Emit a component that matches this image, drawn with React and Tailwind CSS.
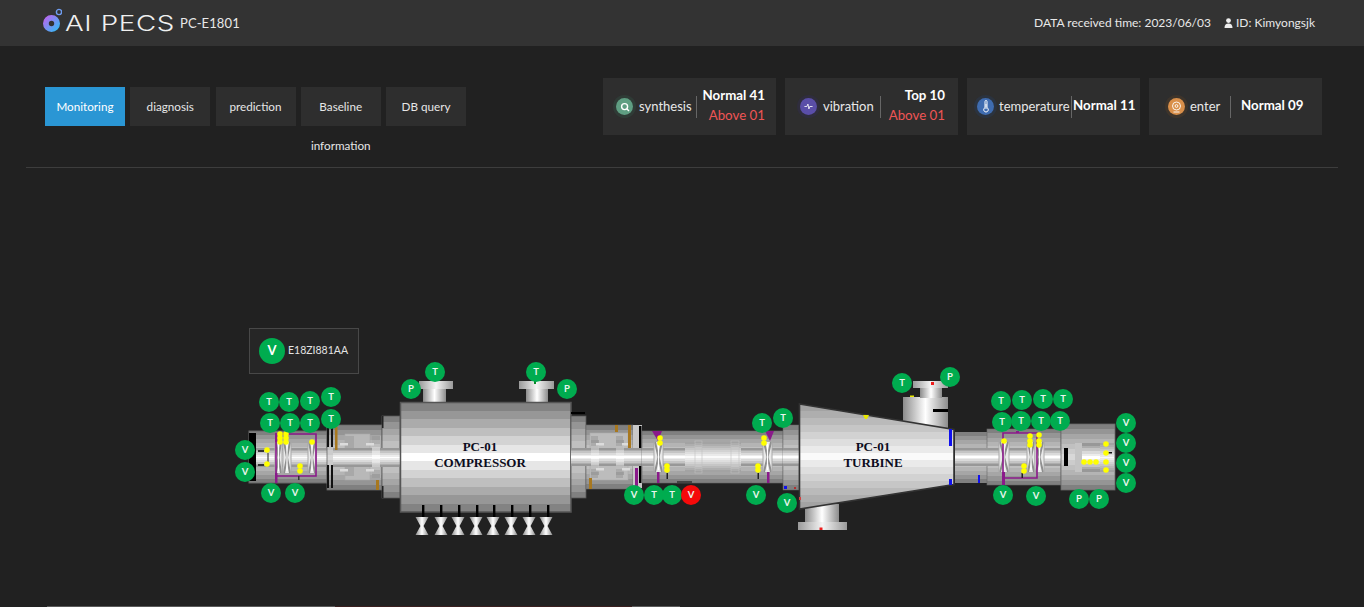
import React from "react";

const font = { fontFamily: "Lato, 'Noto Sans', sans-serif" };

const levels = ["#838383", "#979797", "#ababab", "#bfbfbf", "#d3d3d3", "#e6e6e6", "#ffffff"];
function Band({ id, lv = levels }) {
  const seq = [...lv, ...lv.slice(0, -1).reverse()];
  const n = seq.length;
  return (
    <linearGradient id={id} x1="0" y1="0" x2="0" y2="1">
      {seq.flatMap((c, i) => [
        <stop key={i + "a"} offset={i / n} stopColor={c} />,
        <stop key={i + "b"} offset={(i + 1) / n} stopColor={c} />,
      ])}
    </linearGradient>
  );
}

const R = ({ x, y, w, h, f, s, sw, o }) => <rect x={x} y={y} width={w} height={h} fill={f} stroke={s} strokeWidth={sw} opacity={o} />;
const Dot = ({ x, y }) => <circle cx={x} cy={y} r="2.8" fill="#ffff00" />;

function Bow({ x, y, w, h }) {
  return <polygon points={`${x},${y} ${x + w},${y} ${x + w * 0.62},${y + h / 2} ${x + w},${y + h} ${x},${y + h} ${x + w * 0.38},${y + h / 2}`} fill="url(#v)" />;
}

function Cross({ x, y, w, h }) {
  return (
    <g>
      <R x={x} y={y} w={w} h={h} f="#e9e9e9" />
      <path d={`M${x + 1} ${y}L${x + w - 1} ${y + h}M${x + w - 1} ${y}L${x + 1} ${y + h}`} stroke="#8e8e8e" strokeWidth="2" fill="none" />
      <path d={`M${x + w / 2} ${y + 2}V${y + h - 2}`} stroke="#fff" strokeWidth="1.2" />
      <path d={`M${x} ${y}V${y + h}M${x + w} ${y}V${y + h}`} stroke="#a8a8a8" strokeWidth="1" />
    </g>
  );
}

function Nozzle({ fx, fy, fw, fh, nx, ny, nw, nh }) {
  return (
    <g>
      <R x={nx} y={ny} w={nw} h={nh} f="url(#hz2)" />
      <R x={fx} y={fy} w={fw} h={fh} f="url(#fl)" />
    </g>
  );
}

function Coupler({ x, top, bottom }) {
  return (
    <g>
      <R x={x} y={top} w={8} h={bottom - top} f="url(#sh)" o={0.75} />
    </g>
  );
}

function Machine() {
  const valveX = [422, 441, 458, 476, 493, 511, 529, 546];
  const stemX = [423, 441, 459, 477, 494, 512, 530, 548];
  const yellow = [
    [267, 450], [267, 464], [280, 434], [286, 434], [280, 438], [286, 438], [280, 442], [286, 442], [312, 442], [300, 466], [300, 471],
    [660, 438], [660, 443], [667, 466], [667, 470], [764, 438], [764, 443], [758, 466], [758, 470],
    [1004, 441], [1030, 436], [1030, 441], [1030, 445], [1039, 435], [1039, 441], [1039, 445], [1024, 466], [1024, 471],
    [1106, 444], [1106, 453], [1106, 462], [1106, 470], [1084, 462], [1090, 462], [1096, 462],
  ];
  return (
    <svg className="absolute inset-0 w-full h-full" viewBox="0 168 1364 438">
      <defs>
        <Band id="b" />
        <Band id="bd" lv={["#808080", "#959595", "#a6a6a6", "#b4b4b4", "#c0c0c0", "#cccccc", "#d8d8d8"]} />
        <Band id="t" lv={["#a3a3a3", "#aeaeae", "#bababa", "#c6c6c6", "#d2d2d2", "#dedede", "#eaeaea", "#fafafa"]} />
        <Band id="sh" lv={["#989898", "#adadad", "#c4c4c4", "#dadada", "#ececec", "#ffffff"]} />
        <linearGradient id="hz2" x1="0" x2="1" y1="0" y2="0">
          <stop offset="0" stopColor="#8c8c8c" /><stop offset="0.5" stopColor="#ffffff" /><stop offset="1" stopColor="#8c8c8c" />
        </linearGradient>
        <linearGradient id="fl" x1="0" x2="1" y1="0" y2="0">
          <stop offset="0" stopColor="#9a9a9a" /><stop offset="0.5" stopColor="#f4f4f4" /><stop offset="1" stopColor="#9a9a9a" />
        </linearGradient>
        <linearGradient id="v" x1="0" x2="1" y1="0" y2="0">
          <stop offset="0" stopColor="#8a8a8a" /><stop offset="0.5" stopColor="#ffffff" /><stop offset="1" stopColor="#8a8a8a" />
        </linearGradient>
      </defs>

      {/* left bearing */}
      <R x={249} y={431} w={78} h={52} f="url(#bd)" s="#666" sw={1} />
      <R x={249} y={433} w={7} h={48} f="#000" />
      <R x={256} y={448} w={144} h={19} f="url(#sh)" />
      <R x={258} y={450} w={6} h={2} f="#333" />
      <R x={258} y={464} w={6} h={2} f="#333" />
      <R x={267.5} y={453} w={1} h={10} f="#222" />
      <Cross x={275} y={442} w={7} h={31} />
      <Cross x={283} y={442} w={8} h={31} />
      <Cross x={308} y={442} w={8} h={31} />
      <path d="M276 434H316V476H276Z" fill="none" stroke="#8a1a8a" strokeWidth="1.6" />
      <R x={275} y={433} w={2.5} h={9} f="#8a1a8a" />
      <R x={275} y={473} w={2.5} h={10} f="#8a1a8a" />
      <R x={298} y={476} w={1.5} h={4} f="#333" />

      {/* left coupling */}
      <R x={327} y={425} w={55} h={65} f="url(#bd)" s="#666" sw={0.8} />
      <R x={382} y={416} w={18} h={82} f="url(#bd)" s="#555" sw={0.8} />
      <R x={382} y={416} w={1.5} h={12} f="#222" />
      <R x={382} y={486} w={1.5} h={12} f="#222" />
      <R x={345} y={434} w={25} h={46} f="#b8b8b8" s="#a8a8a8" sw={0.6} />
      <R x={345} y={436} w={9} h={40} f="#a8a8a8" />
      <R x={372} y={436} w={9} h={42} f="#b0b0b0" />
      <R x={333} y={448} w={67} h={19} f="url(#sh)" />
      <Coupler x={372} top={436} bottom={478} />
      <R x={340} y={443} w={8} h={2.5} f="#dcdcdc" />
      <R x={340} y={469} w={8} h={2.5} f="#dcdcdc" />
      <R x={366} y={443} w={8} h={2.5} f="#dcdcdc" />
      <R x={366} y={469} w={8} h={2.5} f="#dcdcdc" />
      <R x={327} y={428} w={2} h={19} f="#111" />
      <R x={331} y={428} w={2} h={19} f="#111" />
      <R x={327} y={465} w={2} h={23} f="#111" />
      <R x={331} y={465} w={2} h={23} f="#111" />
      <R x={335} y={427} w={2.5} h={23} f="#a8781f" />
      <R x={376} y={480} w={3} h={10} f="#a8781f" />

      {/* compressor */}
      <Nozzle fx={419} fy={381} fw={34} fh={8} nx={423} ny={389} nw={23} nh={14} />
      <Nozzle fx={519} fy={381} fw={35} fh={8} nx={526} ny={389} nw={22} nh={14} />
      <R x={534} y={381} w={2} h={3} f="#0a8a2a" />
      <R x={400.5} y={402.5} w={170.5} h={109.5} f="url(#b)" s="#555" sw={1.5} />
      {stemX.map((x) => <R key={x} x={x - 1} y={505} w={2.4} h={12} f="#000" />)}
      {valveX.map((x) => <Bow key={x} x={x - 6.5} y={517} w={13} h={18} />)}

      {/* mid coupling */}
      <R x={571} y={416} w={15} h={82} f="url(#bd)" s="#555" sw={0.8} />
      <R x={571} y={412} w={14} h={2} f="#000" />
      <R x={586} y={425} w={47} h={64} f="url(#bd)" s="#666" sw={0.6} />
      <R x={590} y={433} w={38} h={47} f="#bcbcbc" s="#acacac" sw={0.6} />
      <R x={591} y={436} w={7} h={42} f="#a8a8a8" />
      <R x={616} y={436} w={7} h={42} f="#a8a8a8" />
      <R x={571} y={448} w={72} h={18} f="url(#sh)" />
      <Coupler x={591} top={440} bottom={475} />
      <Coupler x={616} top={440} bottom={475} />
      <R x={596} y={443} w={8} h={2.5} f="#dcdcdc" />
      <R x={596} y={468} w={8} h={2.5} f="#dcdcdc" />
      <R x={622} y={443} w={8} h={2.5} f="#dcdcdc" />
      <R x={622} y={468} w={8} h={2.5} f="#dcdcdc" />
      <R x={615} y={425} w={3} h={7} f="#a8781f" />
      <R x={628} y={425} w={3} h={23} f="#a8781f" />
      <R x={589} y={478} w={3} h={11} f="#a8781f" />
      <R x={633} y={425} w={9} h={23} f="#c8c8c8" />
      <R x={639} y={426} w={2.5} h={22} f="#000" />
      <R x={633} y={466} w={9} h={22} f="#c8c8c8" />
      <R x={635} y={468} w={3} h={18} f="#8a1a8a" />
      <R x={639} y={466} w={2.5} h={17} f="#000" />

      {/* intermediate shaft */}
      <R x={642} y={431} w={141} h={52} f="url(#bd)" s="#666" sw={0.6} />
      <R x={642} y={448} w={141} h={18} f="url(#sh)" />
      <R x={685} y={442} w={56} h={30} f="url(#t)" />
      <R x={695} y={441} w={7} h={32} f="url(#t)" s="#c0c0c0" sw={0.6} />
      <R x={731} y={441} w={8} h={32} f="url(#t)" s="#c0c0c0" sw={0.6} />
      <polygon points="652,431 662,431 658,441" fill="#8a1a8a" />
      <polygon points="765,431 774,431 770,441" fill="#8a1a8a" />
      <Cross x={654} y={442} w={9} h={30} />
      <Cross x={763} y={442} w={9} h={30} />
      <R x={657} y={472} w={2.5} h={11} f="#8a1a8a" />
      <R x={767} y={472} w={2.5} h={11} f="#8a1a8a" />
      <R x={666.5} y={473} w={1.5} h={6} f="#222" />
      <R x={757.5} y={473} w={1.5} h={6} f="#222" />
      <R x={677} y={481} w={15} h={2} f="#444" />
      <R x={783} y={425} w={16} h={65} f="url(#bd)" s="#666" sw={0.5} />
      <R x={783} y={448} w={16} h={18} f="url(#sh)" />
      <R x={784} y={486} w={3} h={3} f="#1010ee" />
      <R x={794} y={487} w={2} h={2} f="#b03030" />

      {/* turbine nozzles */}
      <R x={903} y={397} w={45} h={34} f="url(#hz2)" />
      <R x={920} y={388} w={22} h={10} f="url(#hz2)" />
      <R x={913} y={381} w={35} h={7} f="url(#fl)" />
      <R x={933} y={409} w={15} h={3} f="#000" />
      <R x={931} y={382} w={3} h={3} f="#ee1c1c" />
      <R x={910} y={395.5} w={4} h={1.5} f="#e8e800" />
      <R x={805} y={504} w={34} h={19} f="url(#hz2)" />
      <R x={798} y={522} w={49} h={8} f="url(#fl)" />
      <R x={819.5} y={527.5} w={3} h={2.5} f="#ee1c1c" />

      {/* turbine */}
      <polygon points="799.5,404 954,429.5 954,484.5 799.5,509" fill="url(#t)" stroke="#333" strokeWidth="1.6" />
      <R x={949} y={429} w={3} h={17} f="#1010ee" />
      <R x={949} y={479} w={3} h={6} f="#1010ee" />
      <polygon points="863,415 869,415 867,419 865,419" fill="#e8e800" />
      <R x={799} y={497} w={2} h={3} f="#d04040" />

      {/* right bearing */}
      <R x={955} y={432} w={32} h={51} f="url(#bd)" />
      <R x={978} y={475} w={2} h={8} f="#1010ee" />
      <R x={987} y={429} w={74} h={56} f="url(#bd)" s="#666" sw={0.6} />
      <R x={955} y={448} w={110} h={18} f="url(#sh)" />
      <Cross x={999} y={442} w={10} h={30} />
      <Cross x={1027} y={442} w={8} h={30} />
      <Cross x={1035} y={442} w={9} h={30} />
      <path d="M1003 433H1037V478H1003Z" fill="none" stroke="#8a1a8a" strokeWidth="1.6" />
      <R x={1002} y={472} w={3} h={13} f="#8a1a8a" />
      <R x={1016} y={431} w={3} h={2} f="#8a1a8a" />
      <R x={1021.5} y={473} w={1.5} h={5} f="#222" />

      {/* end block */}
      <R x={1061} y={424} w={54} h={66} f="url(#bd)" s="#666" sw={0.8} />
      <R x={1075} y={443} w={7} h={29} f="#c4c4c4" />
      <R x={1082} y={443} w={18} h={29} f="url(#sh)" />
      <R x={1100} y={443} w={14} h={29} f="url(#t)" />
      <R x={1064} y={448} w={4} h={18} f="#000" />
      <R x={1107} y={452} w={5} h={1.5} f="#111" />

      {yellow.map(([x, y]) => <Dot key={x + "-" + y} x={x} y={y} />)}
    </svg>
  );
}

const badges = [
  ["T", 269, 402], ["T", 289, 402], ["T", 310, 401], ["T", 331, 397],
  ["T", 270, 423], ["T", 290, 423], ["T", 310, 423], ["T", 331, 419],
  ["V", 245, 450], ["V", 245, 472], ["V", 271, 493], ["V", 295, 493],
  ["P", 411, 389], ["T", 435, 372], ["T", 536, 372], ["P", 567, 389],
  ["V", 634, 495], ["T", 654, 495], ["T", 672, 495], ["V", 691, 495, true],
  ["V", 756, 495], ["T", 762, 423], ["T", 783, 418], ["V", 787, 503],
  ["T", 902, 383], ["P", 950, 377],
  ["T", 1001, 401], ["T", 1022, 400], ["T", 1043, 399], ["T", 1063, 399],
  ["T", 1002, 422], ["T", 1021, 421], ["T", 1041, 421], ["T", 1060, 421],
  ["V", 1126, 423], ["V", 1126, 443], ["V", 1126, 463], ["V", 1126, 483],
  ["P", 1079, 499], ["P", 1099, 499], ["V", 1003, 495], ["V", 1036, 496],
];

function IconQ() {
  return <svg width="10" height="10" viewBox="0 0 10 10" fill="none" stroke="#fff" strokeWidth="1.4"><circle cx="4.6" cy="4.6" r="3" /><path d="M6.8 6.8 9 9" /></svg>;
}
function IconWave() {
  return <svg width="9" height="9" viewBox="0 0 11 10" fill="none" stroke="#fff" strokeWidth="1"><path d="M0.5 5H3.5L4.8 2 6 8 7 5H10.5" /></svg>;
}
function IconTherm() {
  return <svg width="8" height="13" viewBox="0 0 8 13" fill="none" stroke="#fff" strokeWidth="1"><path d="M3 1.5a1 1 0 0 1 2 0V7.6a2.3 2.3 0 1 1-2 0Z" /><path d="M4 4v5" /></svg>;
}
function IconGauge() {
  return <svg width="11" height="12" viewBox="0 0 11 12" fill="none" stroke="#fff" strokeWidth="0.9"><circle cx="5.500" cy="5" r="4" /><circle cx="5.500" cy="5" r="1.4" /><path d="M2.500 11h6" /></svg>;
}

function Stat({ icon, bg, ring, label, labelW, divGap, top, bottom, rightW, rightAlign }) {
  return (
    <div className="w-[173px] h-[57px] bg-[#2e2e2e] flex items-center">
      <div className={`w-[23px] h-[23px] rounded-full flex items-center justify-center shrink-0 ${ring}`}>
        <div className={`w-[17px] h-[17px] rounded-full flex items-center justify-center ${bg}`}>{icon}</div>
      </div>
      <span className={`text-[13px] text-[#e8e8e8] whitespace-nowrap ${labelW}`}>{label}</span>
      <div className={`w-px h-[22px] bg-[#666] shrink-0 ${divGap}`} />
      <div className={`flex flex-col shrink-0 ${rightW} ${rightAlign}`}>
        <span className="text-[13.300px] leading-[20px] font-bold text-white whitespace-nowrap">{top}</span>
        {bottom && <span className="text-[13.300px] leading-[20px] text-[#ee5555] whitespace-nowrap">{bottom}</span>}
      </div>
    </div>
  );
}

export default function App() {
  const tabs = ["Monitoring", "diagnosis", "prediction", "Baseline information", "DB query"];
  return (
    <div className="w-[1364px] h-[607px] overflow-hidden bg-[#212121] flex flex-col" style={font}>
      <header className="h-[46px] shrink-0 bg-[#333333] flex items-center justify-between pl-[42px] pr-[49px]">
        <div className="flex items-center">
          <svg width="20" height="26" viewBox="0 0 20 26" className="mb-[4px]">
            <defs>
              <linearGradient id="lg" x1="0" y1="0" x2="1" y2="1">
                <stop offset="0" stopColor="#b06cf0" /><stop offset="1" stopColor="#3fb4f5" />
              </linearGradient>
            </defs>
            <circle cx="9.500" cy="15.500" r="5.600" fill="none" stroke="url(#lg)" strokeWidth="5.800" />
            <circle cx="17" cy="4" r="2.600" fill="none" stroke="#6f9cf0" strokeWidth="1.400" />
          </svg>
          <span className="ml-[3px] w-[107px] text-[21px] leading-none font-light text-[#f0f0f0] tracking-[0.5px] whitespace-nowrap origin-left scale-x-[1.32] inline-block" style={{ fontFamily: "Inter, sans-serif" }}>AI PECS</span>
          <span className="ml-[8px] text-[13px] text-[#e8e8e8] tracking-[0.1px] mt-[1px]">PC-E1801</span>
        </div>
        <div className="flex items-center text-[12px] text-[#e8e8e8] whitespace-nowrap">
          <span>DATA received time: 2023/06/03</span>
          <svg width="9" height="10" viewBox="0 0 9 10" className="ml-[13px] mr-[3px]" fill="#eee">
            <circle cx="4.500" cy="2.600" r="2.400" /><path d="M0.500 10C0.500 7 2 5.600 4.500 5.600S8.500 7 8.500 10Z" />
          </svg>
          <span>ID: Kimyongsjk</span>
        </div>
      </header>

      <div className="mx-[26px] h-[122px] shrink-0 border-b border-[#3d3d3d] flex justify-between pl-[19px] pr-[16px]">
        <nav className="flex gap-[5.25px] mt-[41px] items-start">
          {tabs.map((t, i) => (
            <button key={t} className={`w-20 h-[39px] shrink-0 text-[11.700px] leading-[39px] text-center ${i === 0 ? "bg-[#2a96d4] text-white" : "bg-[#2e2e2e] text-[#e6e6e6]"}`}>
              {t}
            </button>
          ))}
        </nav>
        <div className="flex gap-[9px] mt-[32px] items-start">
          <Stat icon={<IconQ />} bg="bg-[#5f9e82]" ring="bg-[#2f3b36] ml-[10px] mr-[2px]" label="synthesis" labelW="w-[58px] pl-[1px]" divGap="" top="Normal 41" bottom="Above 01" rightW="w-[68px] mb-[3px]" rightAlign="items-end" />
          <Stat icon={<IconWave />} bg="bg-[#5a4ea8]" ring="bg-[#2f2d3d] ml-[12px] mr-[0px]" label="vibration" labelW="w-[61px] pl-[3px]" divGap="ml-[-1px]" top="Top 10" bottom="Above 01" rightW="w-[64px] mb-[3px]" rightAlign="items-end" />
          <Stat icon={<IconTherm />} bg="bg-[#3f6cb0]" ring="bg-[#2b333f] ml-[7px] mr-0" label="temperature" labelW="w-[74px] pl-[2px]" divGap="" top="Normal 11" rightW="w-[60px] pl-[1px] mb-[3px]" rightAlign="items-start" />
          <Stat icon={<IconGauge />} bg="bg-[#d98f4a]" ring="bg-[#3d342b] ml-[16px] mr-0" label="enter" labelW="w-[42px] pl-[2px]" divGap="" top="Normal 09" rightW="w-[70px] pl-[10px] mb-[3px]" rightAlign="items-start" />
        </div>
      </div>

      <main className="relative h-[438px] shrink-0">
        <Machine />
        <div className="absolute left-[249px] top-[160px] w-[110px] h-[46px] border border-[#484848] bg-[#262626] flex items-center pl-[9px]">
          <div className="w-[26px] h-[26px] rounded-full bg-[#00ac4f] text-white text-[13px] font-bold flex items-center justify-center shrink-0">V</div>
          <span className="ml-[3px] text-[10.500px] text-[#e4e4e4]">E18ZI881AA</span>
        </div>
        {badges.map(([l, x, y, red]) => (
          <div
            key={l + x + "-" + y}
            className={`absolute w-5 h-5 rounded-full flex items-center justify-center text-[9.500px] font-bold text-[#e8f6ee] ${red ? "bg-[#f50a0a]" : "bg-[#00ac4f]"}`}
            style={{ left: x - 10, top: y - 178 }}
          >
            {l}
          </div>
        ))}
        <div className="absolute left-[400px] top-[271px] w-[160px] text-center text-[13px] leading-[16px] font-bold text-[#0c0c20]" style={{ fontFamily: "'Liberation Serif', serif" }}>
          <div>PC-01</div>
          <div>COMPRESSOR</div>
        </div>
        <div className="absolute left-[793px] top-[271px] w-[160px] text-center text-[13px] leading-[16px] font-bold text-[#0c0c20]" style={{ fontFamily: "'Liberation Serif', serif" }}>
          <div>PC-01</div>
          <div>TURBINE</div>
        </div>
      </main>
      <div className="flex h-px shrink-0">
        <div className="w-[47px]" />
        <div className="w-[288px] bg-[#5a5a5a]" />
        <div className="w-[297px] bg-[#3a1f1f]" />
        <div className="w-[48px] bg-[#5a5a5a]" />
      </div>
    </div>
  );
}
